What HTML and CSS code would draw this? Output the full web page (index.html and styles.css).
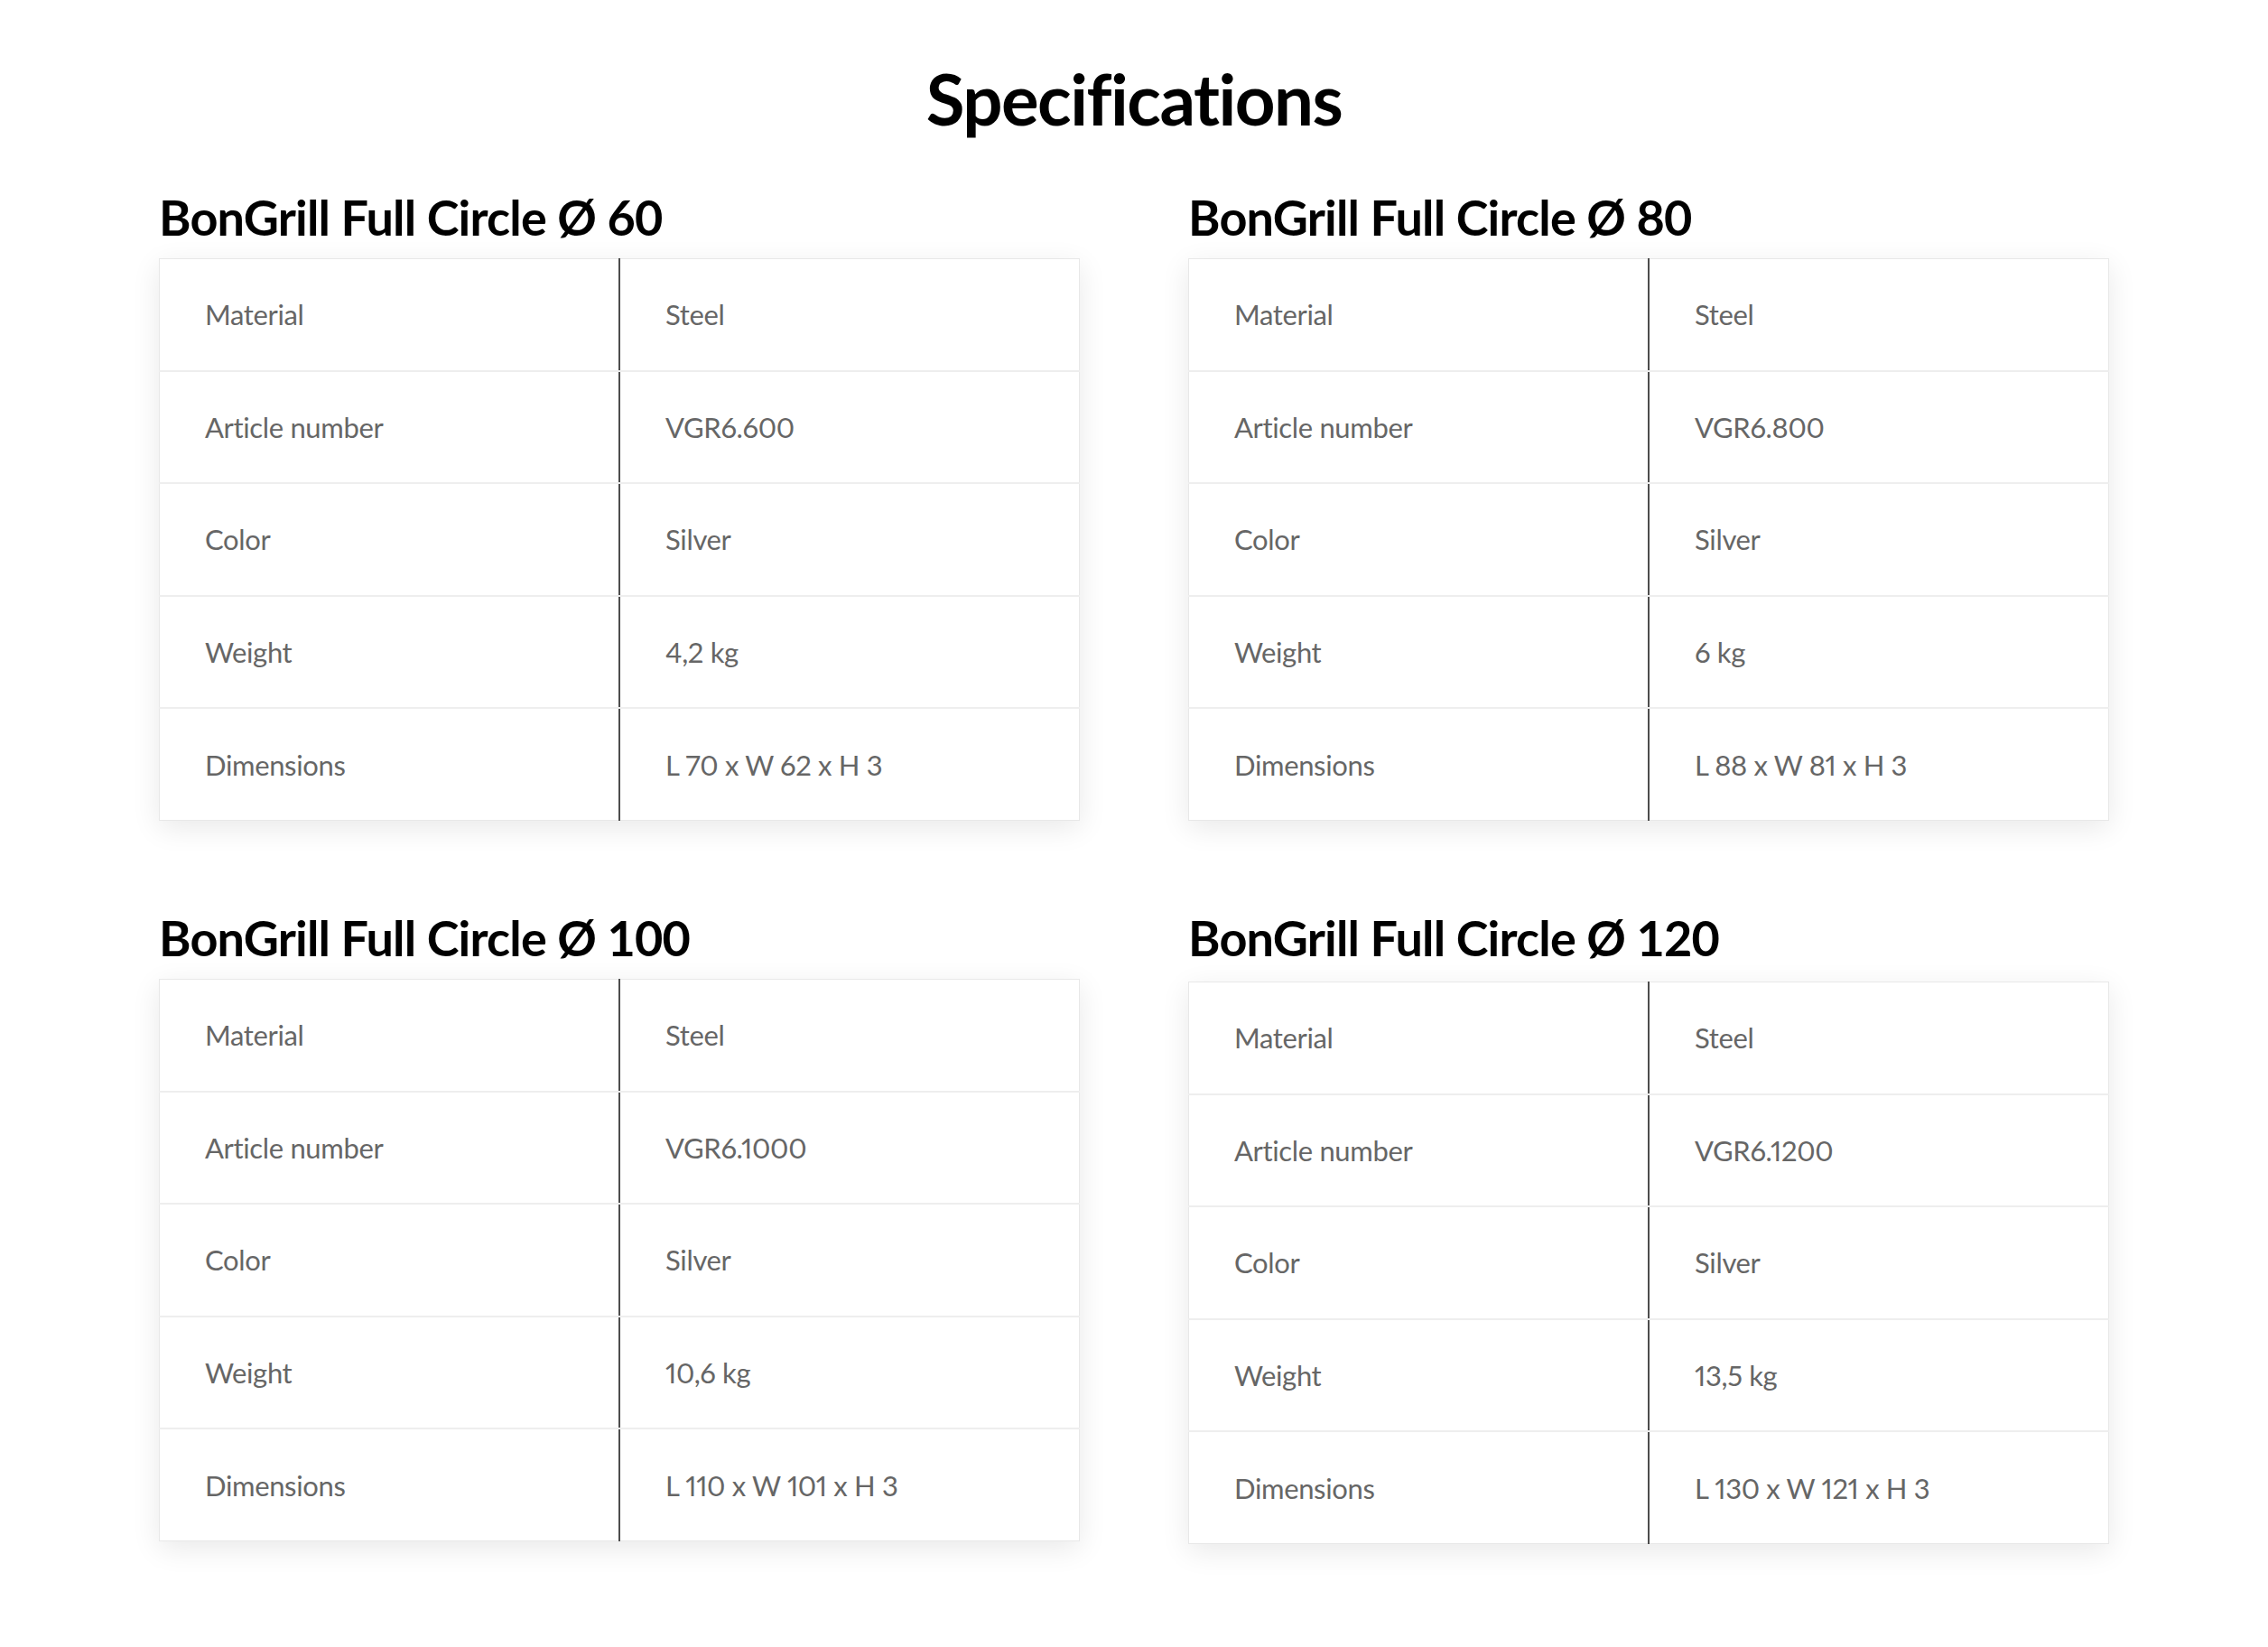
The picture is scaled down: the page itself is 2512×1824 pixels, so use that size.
FILE: index.html
```html
<!DOCTYPE html>
<html lang="en">
<head>
<meta charset="utf-8">
<title>Specifications</title>
<link rel="stylesheet" href="styles.css">
</head>
<body>
<main class="page">
  <h1 class="title">Specifications</h1>
  <div class="grid">
    <section class="spec">
      <h2 class="spec-title">BonGrill Full Circle Ø 60</h2>
      <table class="spec-table">
        <tr><td>Material</td><td>Steel</td></tr>
        <tr><td>Article number</td><td>VGR6.600</td></tr>
        <tr><td>Color</td><td>Silver</td></tr>
        <tr><td>Weight</td><td>4,2 kg</td></tr>
        <tr><td>Dimensions</td><td>L 70 x W 62 x H 3</td></tr>
      </table>
    </section>
    <section class="spec">
      <h2 class="spec-title">BonGrill Full Circle Ø 80</h2>
      <table class="spec-table">
        <tr><td>Material</td><td>Steel</td></tr>
        <tr><td>Article number</td><td>VGR6.800</td></tr>
        <tr><td>Color</td><td>Silver</td></tr>
        <tr><td>Weight</td><td>6 kg</td></tr>
        <tr><td>Dimensions</td><td>L 88 x W 81 x H 3</td></tr>
      </table>
    </section>
    <section class="spec">
      <h2 class="spec-title">BonGrill Full Circle Ø 100</h2>
      <table class="spec-table">
        <tr><td>Material</td><td>Steel</td></tr>
        <tr><td>Article number</td><td>VGR6.1000</td></tr>
        <tr><td>Color</td><td>Silver</td></tr>
        <tr><td>Weight</td><td>10,6 kg</td></tr>
        <tr><td>Dimensions</td><td>L 110 x W 101 x H 3</td></tr>
      </table>
    </section>
    <section class="spec spec-low">
      <h2 class="spec-title">BonGrill Full Circle Ø 120</h2>
      <table class="spec-table">
        <tr><td>Material</td><td>Steel</td></tr>
        <tr><td>Article number</td><td>VGR6.1200</td></tr>
        <tr><td>Color</td><td>Silver</td></tr>
        <tr><td>Weight</td><td>13,5 kg</td></tr>
        <tr><td>Dimensions</td><td>L 130 x W 121 x H 3</td></tr>
      </table>
    </section>
  </div>
</main>
</body>
</html>
```

FILE: styles.css
```css
html, body {
  margin: 0;
  padding: 0;
  background: #ffffff;
}

body {
  font-family: "Lato", "Open Sans", sans-serif;
  color: #000;
}

.page {
  padding: 59px 0 80px;
}

.title {
  margin: 0 0 50px;
  text-align: center;
  font-family: "Lato", sans-serif;
  font-weight: 700;
  font-size: 78px;
  letter-spacing: -1.5px;
  line-height: 100px;
  color: #000;
}

.grid {
  display: grid;
  grid-template-columns: 1020px 1020px;
  column-gap: 120px;
  row-gap: 98px;
  justify-content: center;
}

.spec-title {
  margin: 0 0 13px;
  font-family: "Lato", sans-serif;
  font-weight: 700;
  font-size: 54px;
  letter-spacing: -0.8px;
  line-height: 64px;
  color: #000;
  white-space: nowrap;
}

.spec-low .spec-title {
  margin-bottom: 16px;
}

.spec-table {
  width: 100%;
  border-collapse: collapse;
  border: 1px solid #e8e8e8;
  box-shadow: 0 8px 30px rgba(0, 0, 0, 0.09);
  background: #fff;
  table-layout: fixed;
}

.spec-table td {
  height: 122.6px;
  padding: 0 50px;
  border-bottom: 2px solid #eeeeee;
  font-size: 31px;
  letter-spacing: -0.35px;
  font-variant-numeric: proportional-nums;
  color: #666666;
  vertical-align: middle;
}

.spec-table tr:last-child td {
  border-bottom: 1px solid #e8e8e8;
}

.spec-table td:first-child {
  border-right: 2px solid #4d4d4d;
}
```
